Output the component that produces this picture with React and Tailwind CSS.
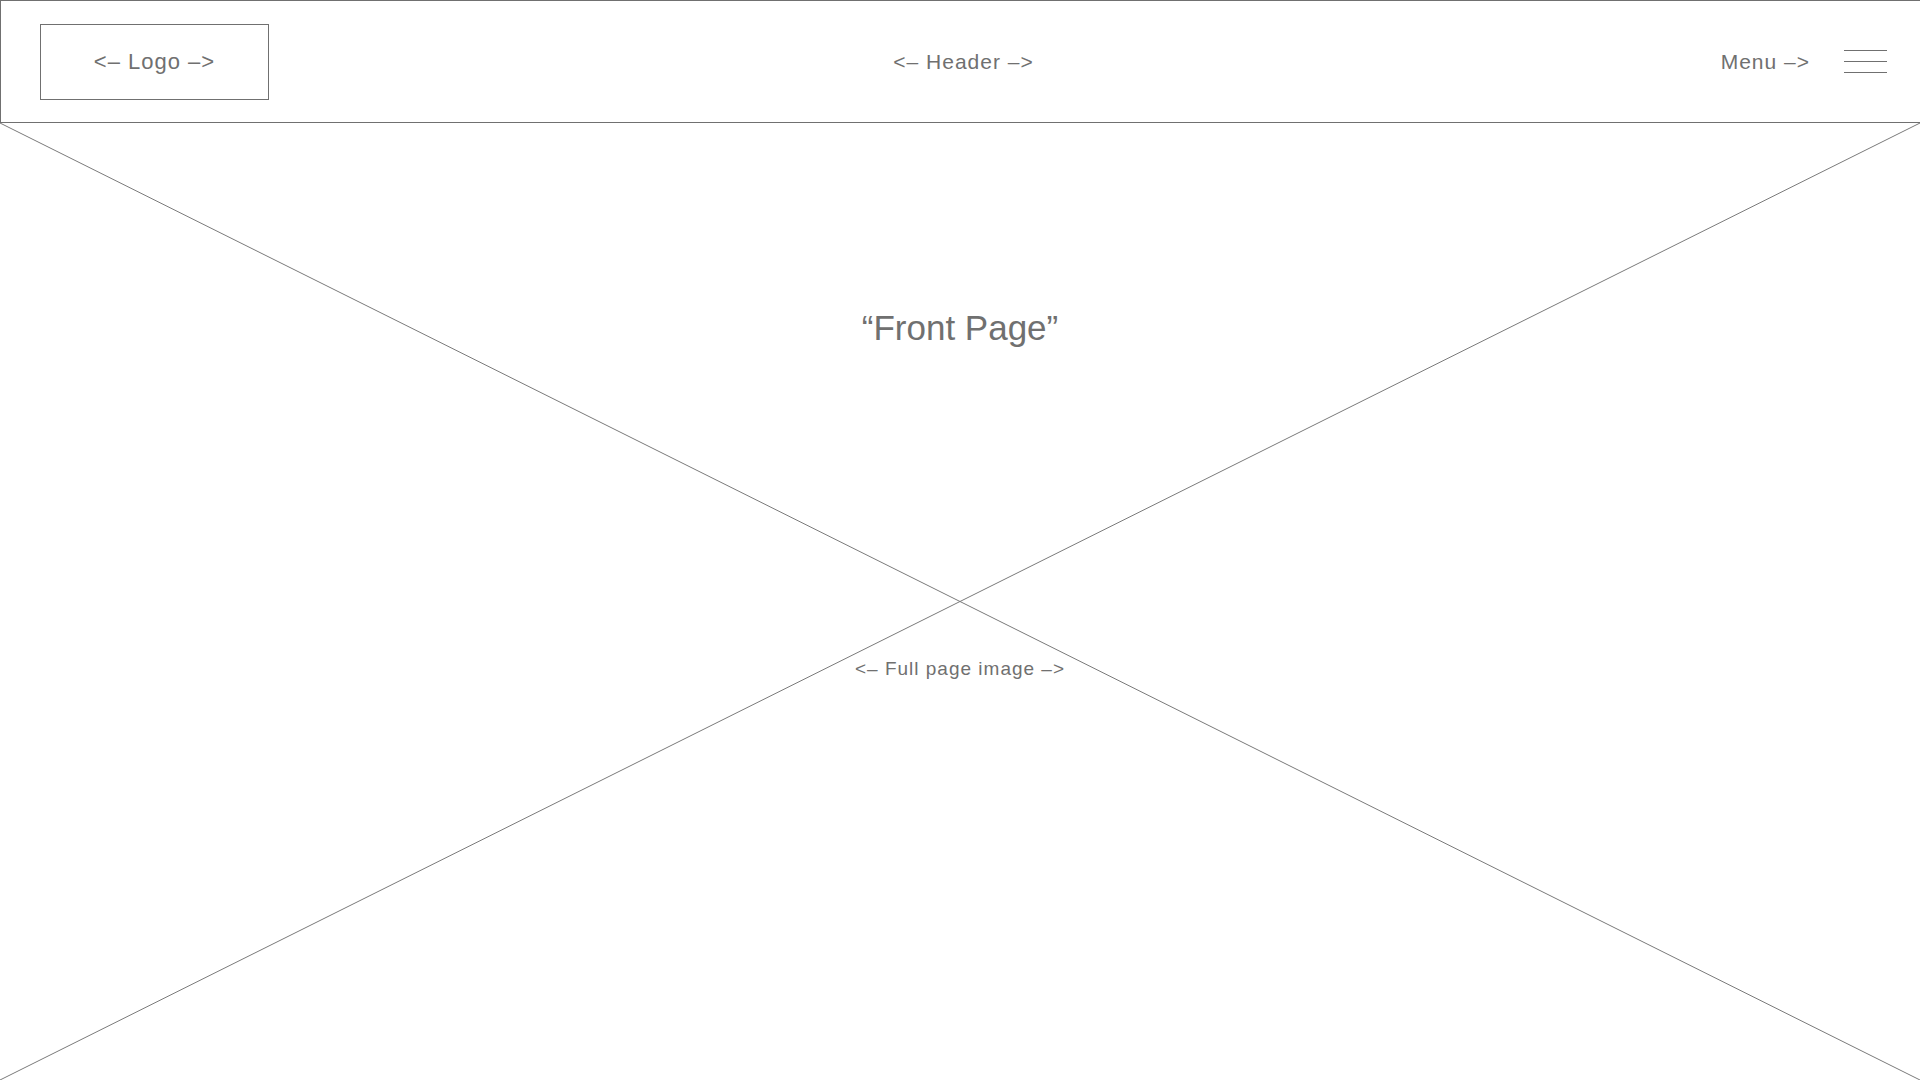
export default function App() {
  return (
    <div
      className="w-[1920px] h-[1080px] flex flex-col bg-white text-[#707070] overflow-hidden"
      style={{ fontFamily: '"Liberation Sans", Arial, sans-serif' }}
    >
      <header className="h-[123px] shrink-0 border-l border-t border-b border-[#707070] grid grid-cols-[1fr_auto_1fr] items-center pl-[39px] pr-[33px]">
        <div className="flex">
          <div className="w-[229px] h-[76px] border border-[#707070] flex items-center justify-center text-[22px] leading-none tracking-[1px]">
            &lt;– Logo –&gt;
          </div>
        </div>
        <div className="text-[21px] leading-none tracking-[1px]">&lt;– Header –&gt;</div>
        <div className="flex items-center justify-end gap-[34px]">
          <span className="text-[21px] leading-none tracking-[1px]">Menu –&gt;</span>
          <div className="w-[43px] flex flex-col gap-[9.5px]">
            <div className="h-[1.5px] bg-[#707070]" />
            <div className="h-[1.5px] bg-[#707070]" />
            <div className="h-[1.5px] bg-[#707070]" />
          </div>
        </div>
      </header>
      <main className="relative flex-1 flex flex-col items-center">
        <svg
          className="absolute inset-0 w-full h-full"
          viewBox="0 0 1920 957"
          preserveAspectRatio="none"
        >
          <line x1="0" y1="0" x2="1920" y2="957" stroke="#7a7a7a" strokeWidth="1" />
          <line x1="1920" y1="0" x2="0" y2="957" stroke="#7a7a7a" strokeWidth="1" />
        </svg>
        <div className="relative mt-[187px] text-[35px] leading-none">“Front Page”</div>
        <div className="relative mt-[314px] text-[19px] leading-none tracking-[1px]">&lt;– Full page image –&gt;</div>
      </main>
    </div>
  );
}
